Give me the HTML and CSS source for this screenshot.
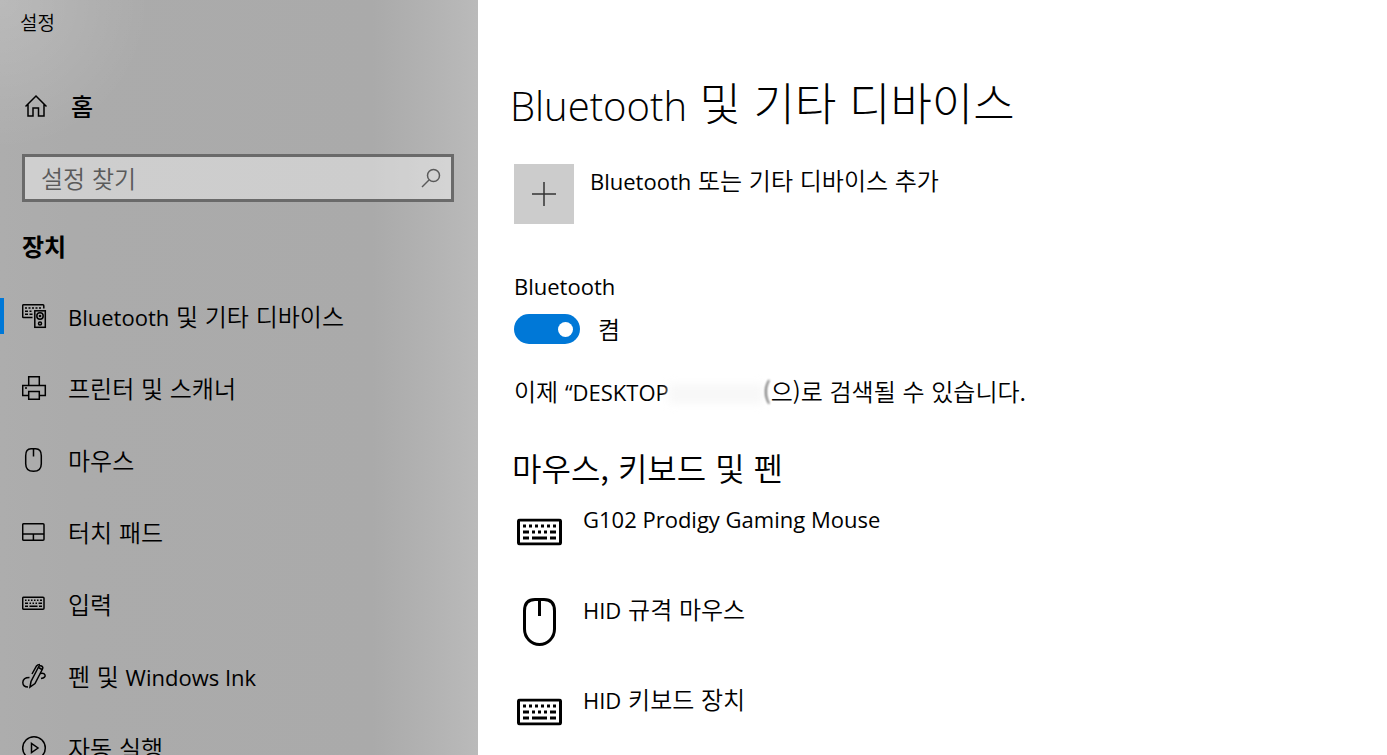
FILE: index.html
```
<!DOCTYPE html>
<html lang="ko">
<head>
    <meta charset="UTF-8">
    <meta name="viewport" content="width=device-width, initial-scale=1.0">
    <title>설정</title>
    <link rel="stylesheet" href="styles.css">
</head>
<body>
    <!-- Shared icons -->
    <svg class="sprite" aria-hidden="true">
        <symbol id="keyboard" viewBox="0 0 45 27">
            <rect x="1.5" y="1.5" width="42" height="24" rx="1.5" fill="none" stroke="currentColor" stroke-width="3"/>
            <path d="M6 7.5h3M12 7.5h3M18 7.5h3M24 7.5h3M30 7.5h3M36 7.5h3M6 13.5h6M15 13.5h3M21 13.5h3M27 13.5h3M33 13.5h6M6 19.5h6M15 19.5h15M33 19.5h6" stroke="currentColor" stroke-width="3"/>
        </symbol>
    </svg>

    <aside class="sidebar">
        <div class="window-title">설정</div>
        <a href="#" class="home">
            <svg width="24" height="24" viewBox="0 0 24 24"><path d="M1.5 12.500 12 2 22.500 12.500M4 10.500v11.500h5v-8h5.500v8H20V10.500"/></svg>
            <span>홈</span>
        </a>
        <form class="search">
            <input type="text" id="search" placeholder="설정 찾기" aria-label="설정 찾기">
            <button type="submit" aria-label="찾기">
                <svg width="20" height="20" viewBox="0 0 20 20"><circle cx="12.500" cy="7.500" r="6"/><path d="M8 12 1 19"/></svg>
            </button>
        </form>
        <h2 class="category">장치</h2>
        <nav>
            <a href="#" class="nav-item active">
                <svg width="26" height="26" viewBox="0 0 26 26">
                    <path d="M10.500 14.500H1.500Q.7 14.500.7 13.700V2.700Q.7 1.800 1.500 1.800H21Q21.800 1.800 21.800 2.700V5.500"/>
                    <path d="M3 5h2M6.500 5h2M10 5h2M13.500 5h2M17 5h2M3 8.200h3M7.500 8.200h2M3 11.200h3M7.500 11.200h3"/>
                    <rect x="12.800" y="7.800" width="10.500" height="16.500"/>
                    <circle cx="18" cy="13" r="3.200"/><circle cx="18" cy="13" r=".6"/><circle cx="18" cy="20.500" r="1.500"/>
                </svg>
                <span><span class="en">Bluetooth</span> 및 기타 디바이스</span>
            </a>
            <a href="#" class="nav-item">
                <svg width="26" height="26" viewBox="0 0 26 26">
                    <path d="M6.700 10V1.700h10.600V10M6.700 20.500H.7V10.500h22.600v10h-6M6.700 16.500h10.600v7.800H6.700z"/>
                    <path d="M3 13h2"/>
                </svg>
                <span>프린터 및 스캐너</span>
            </a>
            <a href="#" class="nav-item">
                <svg width="26" height="26" viewBox="0 0 26 26"><path d="M3.700 8.700Q3.700 1.700 9 1.700h4.600Q19.300 1.700 19.300 8.700v8Q19.300 24.300 11.500 24.300T3.700 16.700zM11.500 2v7.500"/></svg>
                <span>마우스</span>
            </a>
            <a href="#" class="nav-item">
                <svg width="26" height="26" viewBox="0 0 26 26"><rect x=".7" y="4.700" width="21.300" height="16.600" rx="1"/><path d="M1 15h21M11.400 15v6"/></svg>
                <span>터치 패드</span>
            </a>
            <a href="#" class="nav-item">
                <svg width="26" height="26" viewBox="0 0 26 26">
                    <rect x=".7" y="6.200" width="21.300" height="12" rx="1"/>
                    <path d="M3 9.200h1.500M6 9.200h1.500M9 9.200h1.500M12 9.200h1.500M15 9.200h1.500M18 9.200h2M3 12.200h3M7.500 12.200h1.500M10.500 12.200h1.500M13.500 12.200h1.500M16.500 12.200h3.500M3 15.200h3M7.500 15.200h8M17 15.200h3"/>
                </svg>
                <span>입력</span>
            </a>
            <a href="#" class="nav-item">
                <svg width="26" height="26" viewBox="0 0 26 26">
                    <path d="M8 24 9 18.500 16.500 4Q17.500 2 19.500 3T20.500 6L13 20.500z"/>
                    <path d="M10 11 14.500 3Q15.500 1.500 18 1.500M18 10.500Q22 9.500 23 12T19 15.500M7.500 14.500Q1 14.500.8 19.500 1 24 6 24M16.500 4.500 20 6.500"/>
                </svg>
                <span>펜 및 <span class="en">Windows Ink</span></span>
            </a>
            <a href="#" class="nav-item">
                <svg width="26" height="26" viewBox="0 0 26 26"><circle cx="12" cy="13" r="11.300"/><path d="M9.500 8.500v9l6.500-4.500z"/></svg>
                <span>자동 실행</span>
            </a>
        </nav>
    </aside>

    <main>
        <h1><span class="en">Bluetooth</span> 및 기타 디바이스</h1>

        <button type="button" class="add-device">
            <span class="plus"><svg width="24" height="24" viewBox="0 0 24 24"><path d="M12 0v24M0 12h24"/></svg></span>
            <span><span class="en">Bluetooth</span> 또는 기타 디바이스 추가</span>
        </button>

        <!-- Bluetooth switch -->
        <section class="bluetooth">
            <label for="bluetooth" class="en">Bluetooth</label>
            <div class="switch">
                <input type="checkbox" id="bluetooth" role="switch" checked>
                <span>켬</span>
            </div>
            <p>이제 <span class="en">“DESKTOP</span><span class="redacted"></span><span class="smudge">(</span>으)로 검색될 수 있습니다.</p>
        </section>

        <section class="devices">
            <h2>마우스, 키보드 및 펜</h2>
            <ul>
                <li>
                    <svg width="45" height="48" viewBox="0 0 45 27"><use href="#keyboard" width="45" height="27"/></svg>
                    <span class="en">G102 Prodigy Gaming Mouse</span>
                </li>
                <li>
                    <svg width="45" height="48" viewBox="0 0 45 48"><path d="M7.500 13Q7.500 1.500 18 1.500h9Q37.500 1.500 37.500 13v18a15 15.500 0 0 1-30 0zM22.500 2v16"/></svg>
                    <span><span class="en">HID</span> 규격 마우스</span>
                </li>
                <li>
                    <svg width="45" height="48" viewBox="0 0 45 27"><use href="#keyboard" width="45" height="27"/></svg>
                    <span><span class="en">HID</span> 키보드 장치</span>
                </li>
            </ul>
        </section>
    </main>
</body>
</html>
```
FILE: styles.css
```
/* Reset default browser styles */
* {
    margin: 0;
    padding: 0;
    box-sizing: border-box;
}

body {
    display: flex;
    height: 100vh;
    overflow: hidden;
    background-color: #fff;
    color: #000;
    font-family: "Noto Sans CJK KR", sans-serif;
    font-size: 24px;
    font-weight: 350;
    line-height: 36px;
}

a {
    color: inherit;
    text-decoration: none;
}

button,
input {
    font: inherit;
    color: inherit;
}

svg {
    flex: none;
    fill: none;
    stroke: currentColor;
    stroke-width: 1.5;
}

.sprite {
    display: none;
}

/* Latin words next to Korean text */
.en {
    font-family: "Open Sans", sans-serif;
    font-size: 22px;
    font-weight: 400;
}

/* Sidebar */
.sidebar {
    flex: none;
    width: 478px;
    background:
        radial-gradient(circle at 0 0, rgba(255, 255, 255, 0.16), transparent 150px),
        linear-gradient(90deg, #adadad 0%, #ababab 15%, #aaaaaa 78%, #b1b1b1 88%, #bababa 100%);
}

.window-title {
    padding: 8px 20px 0;
    font-size: 19px;
    line-height: 28px;
}

.home {
    display: flex;
    align-items: center;
    gap: 23px;
    margin-top: 52px;
    padding-left: 24px;
    font-weight: 500;
}

.search {
    display: flex;
    align-items: center;
    margin: 30px 24px 0 22px;
    height: 48px;
    border: 3px solid #6a6a6a;
    background-color: rgba(255, 255, 255, 0.42);
}

.search input {
    flex: 1;
    min-width: 0;
    padding-left: 16px;
    border: none;
    outline: none;
    background: none;
}

.search input::placeholder {
    color: #5a5a5a;
    opacity: 1;
}

.search button {
    display: flex;
    padding: 10px;
    border: none;
    background: none;
    color: #5a5a5a;
}

.category {
    margin: 26px 22px 16px;
    font-size: 24px;
    font-weight: 700;
}

.nav-item {
    display: flex;
    align-items: center;
    gap: 20px;
    height: 72px;
    padding-left: 22px;
}

.nav-item.active {
    padding-left: 0;
}

.nav-item.active::before {
    content: "";
    width: 4px;
    height: 36px;
    margin-right: -2px;
    background-color: #0078d7;
}

/* Main panel */
main {
    flex: 1;
    min-width: 0;
    padding: 70px 36px 0;
}

h1 {
    margin-left: -4px;
    font-size: 45px;
    font-weight: 300;
    line-height: 64px;
}

h1 .en {
    font-size: 40px;
    font-weight: 300;
}

.add-device {
    display: flex;
    gap: 16px;
    margin-top: 26px;
    border: none;
    background: none;
    line-height: 32px;
    text-align: left;
}

.plus {
    display: flex;
    align-items: center;
    justify-content: center;
    width: 60px;
    height: 60px;
    background-color: #ccc;
    color: #333;
}

.bluetooth {
    margin-top: 44px;
}

.bluetooth label {
    display: block;
}

.switch {
    display: flex;
    align-items: center;
    gap: 18px;
    margin-top: 7px;
}

.switch input {
    display: flex;
    align-items: center;
    justify-content: flex-end;
    appearance: none;
    width: 66px;
    height: 30px;
    padding-right: 7px;
    border-radius: 15px;
    background-color: #0078d7;
}

.switch input::before {
    content: "";
    width: 15px;
    height: 15px;
    border-radius: 50%;
    background-color: #fff;
}

.bluetooth p {
    margin-top: 26px;
}

/* Hidden part of the computer name */
.redacted {
    display: inline-block;
    width: 94px;
    height: 20px;
    background-color: #f8f8f8;
    vertical-align: middle;
    filter: blur(4px);
}

.smudge {
    opacity: 0.7;
    filter: blur(1px);
}

.devices {
    margin-top: 33px;
}

.devices h2 {
    margin-left: -2px;
    font-size: 32px;
    font-weight: 350;
    line-height: 48px;
}

.devices ul {
    list-style: none;
}

.devices li {
    display: flex;
    gap: 21px;
    height: 90px;
    padding: 10px 3px 0;
}

.devices svg {
    margin-top: 7px;
    stroke-width: 3;
}
```
